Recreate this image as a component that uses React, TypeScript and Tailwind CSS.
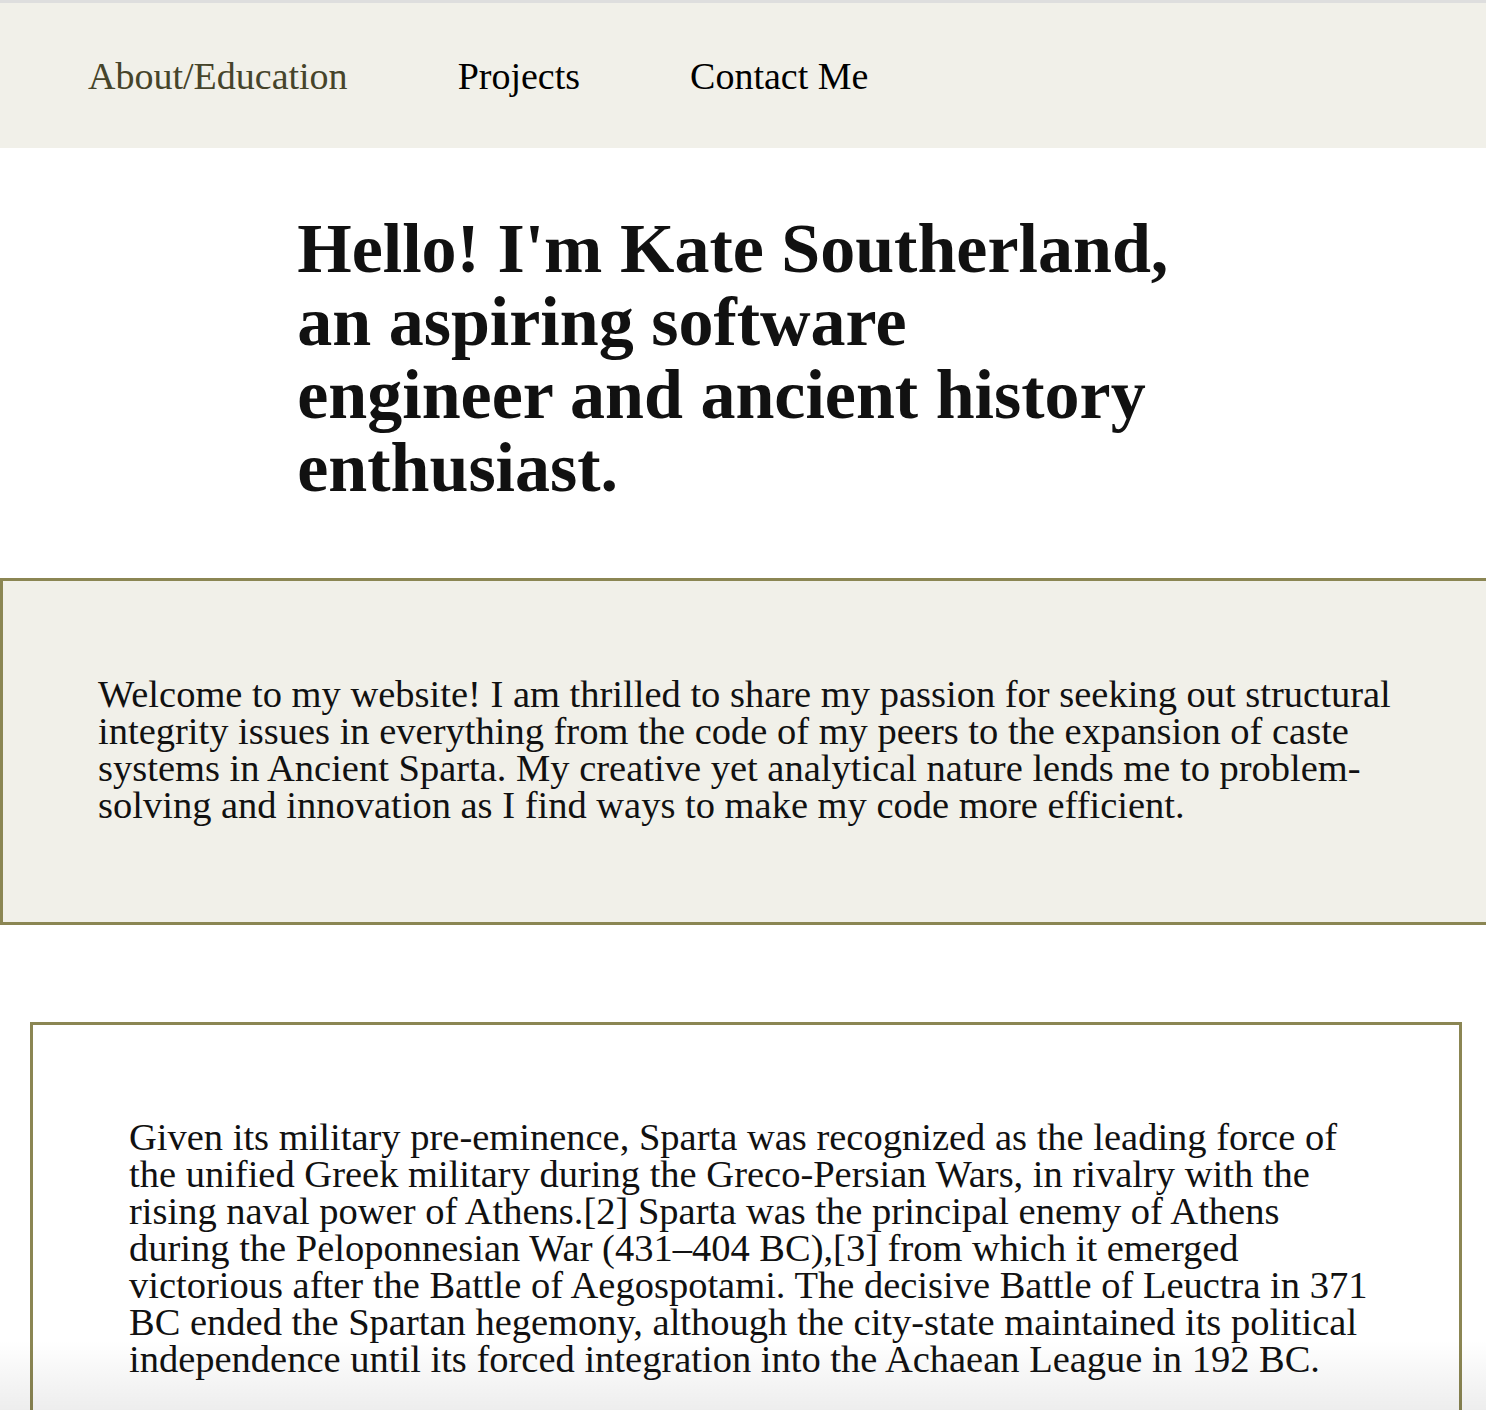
import React from "react";

const navItems = ["About/Education", "Projects", "Contact Me"];

const App: React.FC = () => {
  return (
    <div className="relative h-[1410px] overflow-hidden bg-white font-['Liberation_Serif',serif] text-[#111]">
      {/* nav */}
      <nav className="border-t-[3px] border-[#dedede] bg-[#f1f0e9]">
        <ul className="flex h-[145px] items-center gap-[110px] pl-[88px] text-[38px] leading-none">
          {navItems.map((item, i) => (
            <li
              key={item}
              className={i === 0 ? "text-[#46442a]" : "text-black"}
            >
              {item}
            </li>
          ))}
        </ul>
      </nav>

      {/* hero */}
      <h1 className="mx-auto mt-16 w-3/5 text-[70px] font-bold leading-[73px] text-[#111]">
        Hello! I'm Kate Southerland, an aspiring software
        <br />
        engineer and ancient history enthusiast.
      </h1>

      {/* welcome box */}
      <section className="mt-[74px] w-[calc(100%+3px)] border-[3px] border-[#8b8653] bg-[#f1f0e9] pl-[95px] pr-[92px] pt-[95px] pb-[98px]">
        <p className="text-[38.5px] leading-[37px] text-[#111]">
          Welcome to my website! I am thrilled to share my passion for seeking
          out structural integrity issues in everything from the code of my
          peers to the expansion of caste systems in Ancient Sparta. My
          creative yet analytical nature lends me to problem-solving and
          innovation as I find ways to make my code more efficient.
        </p>
      </section>

      {/* sparta box */}
      <section className="mt-[97px] ml-[30px] w-[1432px] border-[3px] border-[#8b8653] bg-white pl-24 pr-[86px] pt-[94px] pb-24">
        <p className="text-[38.5px] leading-[37px] text-[#111]">
          Given its military pre-eminence, Sparta was recognized as the leading
          force of the unified Greek military during the Greco-Persian Wars, in
          rivalry with the rising naval power of Athens.[2] Sparta was the
          principal enemy of Athens during the Peloponnesian War (431–404
          BC),[3] from which it emerged victorious after the Battle of
          Aegospotami. The decisive Battle of Leuctra in 371 BC ended the
          Spartan hegemony, although the city-state maintained its political
          independence until its forced integration into the Achaean League in
          192 BC.
        </p>
      </section>

      {/* window shadow at the bottom edge */}
      <div className="pointer-events-none absolute inset-x-0 bottom-0 h-[70px] bg-gradient-to-b from-transparent to-black/[0.07]" />
    </div>
  );
};

export default App;
